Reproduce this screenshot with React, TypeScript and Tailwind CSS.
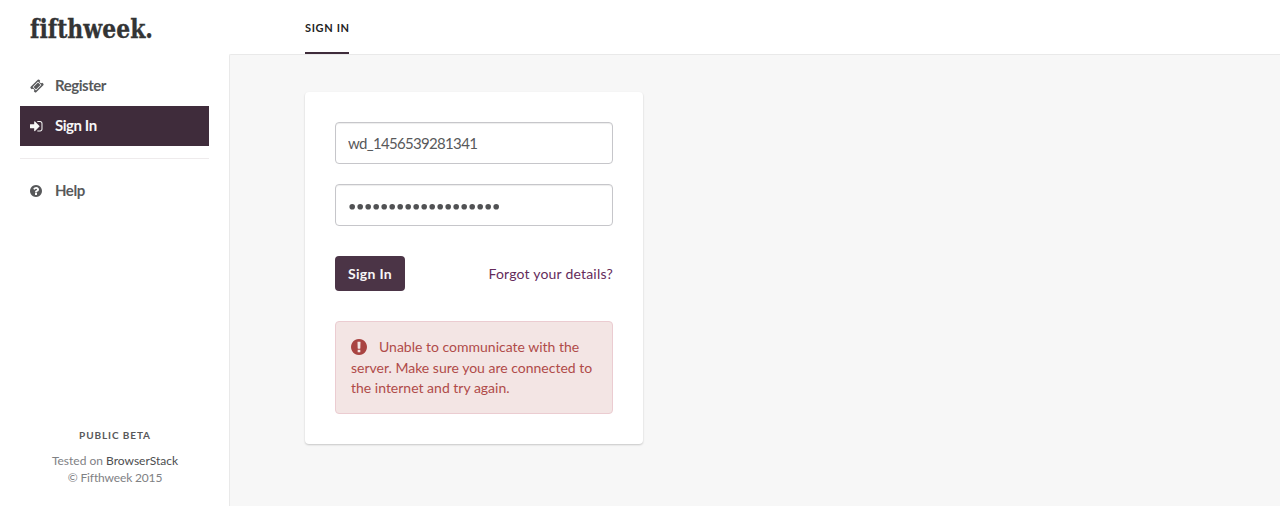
import type { ReactNode } from "react";

const TICKET =
  "M1024 452l316 316-572 572-316-316zM813 1431l618-618q19-19 19-45t-19-45l-362-362q-18-18-45-18t-45 18l-618 618q-19 19-19 45t19 45l362 362q18 18 45 18t45-18zM1702 794l-907 908q-37 37-90.5 37t-90.5-37l-126-126q56-56 56-136t-56-136-136-56-136 56l-125-126q-37-37-37-90.5t37-90.5l907-906q37-37 90.5-37t90.5 37l125 125q-56 56-56 136t56 136 136 56 136-56l126 125q37 37 37 90.5t-37 90.5z";
const SIGN_IN =
  "M1312 896q0 26-19 45l-544 544q-19 19-45 19t-45-19-19-45v-288h-448q-26 0-45-19t-19-45v-384q0-26 19-45t45-19h448v-288q0-26 19-45t45-19 45 19l544 544q19 19 19 45zm352-352v704q0 119-84.5 203.5t-203.5 84.5h-320q-13 0-22.5-9.5t-9.5-22.5q0-4-1-20t-.5-26.5 3-23.5 10-19.5 20.5-6.5h320q66 0 113-47t47-113v-704q0-66-47-113t-113-47h-312l-11.5-1-11.5-3-8-5.5-7-9-2-13.5q0-4-1-20t-.5-26.5 3-23.5 10-19.5 20.5-6.5h320q119 0 203.5 84.5t84.5 203.5z";
const QUESTION =
  "M1024 1376v-192q0-14-9-23t-23-9h-192q-14 0-23 9t-9 23v192q0 14 9 23t23 9h192q14 0 23-9t9-23zm256-672q0-88-55.5-163t-138.5-116-170-41q-243 0-371 213-15 24 8 42l132 100q7 6 19 6 16 0 25-12 53-68 86-92 34-24 86-24 48 0 85.5 26t37.5 59q0 38-20 61t-68 45q-63 28-115.5 86.5t-52.5 125.5v36q0 14 9 23t23 9h192q14 0 23-9t9-23q0-19 21.5-49.5t54.5-49.5q32-18 49-28.5t46-35 44.5-48 28-60.5 12.5-81zm384 192q0 209-103 385.5t-279.5 279.5-385.5 103-385.5-103-279.5-279.5-103-385.5 103-385.5 279.5-279.5 385.5-103 385.5 103 279.5 279.5 103 385.5z";
const EXCLAMATION =
  "M896 128q209 0 385.5 103t279.5 279.5 103 385.5-103 385.5-279.5 279.5-385.5 103-385.5-103-279.5-279.5-103-385.5 103-385.5 279.5-279.5 385.5-103zm128 1247v-190q0-14-9-23.5t-22-9.5h-192q-13 0-23 10t-10 23v190q0 13 10 23t23 10h192q13 0 22-9.5t9-23.5zm-2-344l18-621q0-12-10-18-10-8-24-8h-220q-14 0-24 8-10 6-10 18l17 621q0 10 10 17.5t24 7.5h185q14 0 23.5-7.5t10.5-17.5z";

function Icon({ d, viewBox, className }: { d: string; viewBox: string; className: string }) {
  return (
    <svg viewBox={viewBox} className={className} fill="currentColor" aria-hidden="true">
      <path d={d} />
    </svg>
  );
}

function NavItem({ icon, label, active = false }: { icon: ReactNode; label: string; active?: boolean }) {
  return (
    <a
      href="#"
      className={
        active
          ? "flex h-10 items-center bg-[#3f2c3b] pl-2.5 text-[15px] font-bold tracking-[-0.45px] text-[#f7f7f7]"
          : "flex h-10 items-center pl-2.5 text-[15px] font-bold tracking-[-0.45px] text-[#58595b]"
      }
    >
      <span className="flex w-[25px] items-center">{icon}</span>
      <span className="pb-px">{label}</span>
    </a>
  );
}

function Logo() {
  return (
    <svg width="124" height="30" className="block overflow-visible" role="img" aria-label="fifthweek.">
      <text
        x="0"
        y="24"
        textLength="123"
        lengthAdjust="spacingAndGlyphs"
        fill="#333435"
        stroke="#333435"
        strokeWidth="0.3"
        className="font-['DejaVu_Serif_Condensed','DejaVu_Serif',serif] text-[25.5px] font-bold [font-variant-ligatures:none]"
      >
        fifthweek.
      </text>
    </svg>
  );
}

export default function App() {
  return (
    <div className="flex h-[506px] w-full overflow-hidden bg-white font-['Lato',sans-serif] text-[#58595b]">
      <aside className="flex w-[229px] shrink-0 flex-col px-5">
        <div className="h-[66px] pt-[14px] pl-[10px]">
          <Logo />
        </div>
        <nav>
          <NavItem label="Register" icon={<Icon d={TICKET} viewBox="0 0 1792 1792" className="size-[14px]" />} />
          <NavItem active label="Sign In" icon={<Icon d={SIGN_IN} viewBox="128 128 1536 1536" className="h-[12.5px] w-[12.5px]" />} />
          <hr className="mt-3 mb-3 border-t border-[#eeebec]" />
          <NavItem label="Help" icon={<Icon d={QUESTION} viewBox="128 128 1536 1536" className="size-3" />} />
        </nav>
        <footer className="mt-auto pb-5 text-center text-[12px] leading-[17px] text-[#808184]">
          <p className="mb-2 pl-px text-[10px] font-bold tracking-[0.9px] text-[#58595b]">PUBLIC BETA</p>
          <p className="pl-px">
            Tested on <a href="#" className="text-[#4c4d4f]">BrowserStack</a>
          </p>
          <p className="pl-px tracking-[-0.15px]">© Fifthweek 2015</p>
        </footer>
      </aside>

      <div className="flex min-w-0 flex-1 flex-col">
        <header className="flex h-[54px] shrink-0 pl-[76px]">
          <a
            href="#"
            className="flex h-[54px] w-[44px] items-center border-b-2 border-[#3f2c3b] pt-[4px] text-[11px] font-bold tracking-[0.65px] whitespace-nowrap text-[#222324]"
          >
            SIGN IN
          </a>
        </header>
        <main className="flex-1 rounded-tl-[2px] border-t border-l border-[#e9e9e9] bg-[#f7f7f7] pt-[37px] pl-[75px]">
          <form className="w-[338px] rounded-[4px] bg-white p-[30px] shadow-[0_1px_2px_rgba(0,0,0,0.2)]">
            <input
              type="text"
              defaultValue="wd_1456539281341"
              className="block h-[42px] w-full rounded-[4px] border border-[#c6c6ca] bg-white px-3 text-[15px] tracking-[-0.68px] text-[#58595b] shadow-[inset_0_1px_1px_rgba(0,0,0,0.075)] outline-none"
            />
            <div className="mt-5 flex h-[42px] items-center rounded-[4px] border border-[#c6c6ca] pl-[13px] shadow-[inset_0_1px_1px_rgba(0,0,0,0.075)]">
              <svg width="154" height="8" className="mt-[4px]" fill="#515254" aria-hidden="true">
                {Array.from({ length: 19 }, (_, i) => (
                  <circle key={i} cx={3.2 + i * 8} cy="3.7" r="2.8" />
                ))}
              </svg>
            </div>
            <div className="mt-[30px] flex h-[35px] items-center justify-between">
              <button
                type="button"
                className="h-[35px] w-[70px] rounded-[4px] bg-[#4b3446] text-[14px] font-bold tracking-[0.3px] text-[#f7f7f7]"
              >
                Sign In
              </button>
              <a href="#" className="text-[14px] tracking-[0.2px] text-[#652b5b]">
                Forgot your details?
              </a>
            </div>
            <div className="mt-[30px] h-[93px] rounded-[4px] border border-[#ebccd1] bg-[#f3e5e4] px-[15px] pt-[15px] text-[14px] leading-[20.5px] text-[#b04b49]">
              <Icon d={EXCLAMATION} viewBox="128 128 1536 1536" className="mr-3 inline-block size-4 align-[-3px] text-[#a94442]" />
              Unable to communicate with the server. Make sure you are connected to the internet and try again.
            </div>
          </form>
        </main>
      </div>
    </div>
  );
}
